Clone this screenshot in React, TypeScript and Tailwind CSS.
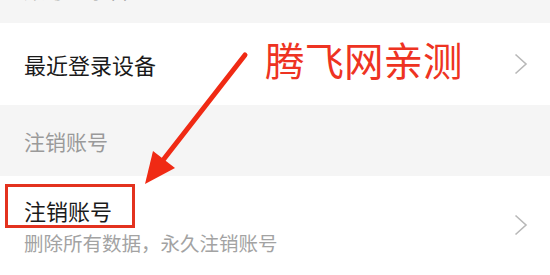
function Chevron() {
  return (
    <svg width="14" height="22" viewBox="0 0 14 22" className="shrink-0">
      <polyline points="1.5,1.5 12,11 1.5,20.5" fill="none" stroke="#b8b8b8" strokeWidth="1.6" />
    </svg>
  );
}

export default function App() {
  return (
    <div
      className="relative h-[275px] w-[550px] overflow-hidden bg-[#f5f5f5]"
      style={{ fontFamily: '"Noto Sans CJK SC", "Noto Sans", sans-serif' }}
    >
      {/* cut-off section header */}
      <div className="h-[23px] overflow-hidden px-6">
        <p className="-mt-[21px] text-[21px] leading-[21px] text-[#9a9a9a]">账号登录管理</p>
      </div>

      <div className="flex h-[82px] items-center justify-between bg-white pl-6 pr-[22px]">
        <span className="text-[22px] text-[#1a1a1a]">最近登录设备</span>
        <Chevron />
      </div>

      <div className="flex h-[71px] items-center px-6 pt-[3px] text-[21px] text-[#9a9a9a]">注销账号</div>

      <div className="flex h-[99px] items-center justify-between bg-white pb-[2px] pl-6 pr-[22px]">
        <div className="flex flex-col">
          <span className="text-[22px] leading-[30px] text-[#1a1a1a]">注销账号</span>
          <span className="mt-[6px] text-[19.5px] leading-[24px] text-[#a3a3a3]">删除所有数据，永久注销账号</span>
        </div>
        <Chevron />
      </div>

      {/* annotation overlays */}
      <div className="absolute left-[5px] top-[184px] h-[44px] w-[130px] border-[3px] border-[#e3321f]" />
      <span className="absolute left-[265px] top-[34px] text-[39.5px] leading-[50px] text-[#ee3322]">腾飞网亲测</span>
      <svg className="absolute left-0 top-0" width="550" height="275" viewBox="0 0 550 275">
        <line x1="245" y1="55" x2="160" y2="164" stroke="#f02a14" strokeWidth="5" strokeLinecap="round" />
        <polygon points="145,184 153,151 175,168" fill="#f02a14" />
      </svg>
    </div>
  );
}
